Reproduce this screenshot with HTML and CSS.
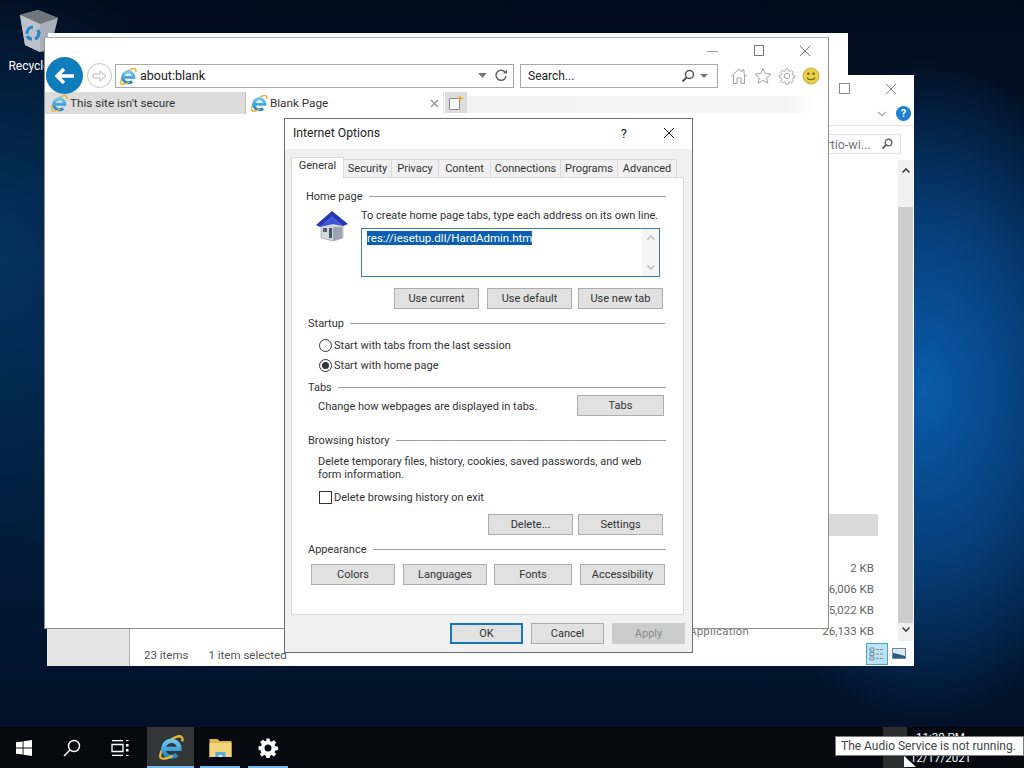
FILE: index.html
```html
<!DOCTYPE html>
<html lang="en">
<head>
<meta charset="utf-8">
<title>Internet Options</title>
<link rel="stylesheet" href="styles.css">
</head>
<body>
<svg class="defs" width="0" height="0" aria-hidden="true">
  <defs>
    <linearGradient id="ieblue" x1="0" y1="0" x2="0" y2="1">
      <stop offset="0" stop-color="#6cc6ee"/>
      <stop offset="1" stop-color="#1f86c8"/>
    </linearGradient>
    <symbol id="ie" viewBox="0 0 24 24">
      <path d="M2.500 22C.5 18 7 6.500 16.500 2.800c4.500-1.700 7-.3 5.800 4" fill="none" stroke="#e9b637" stroke-width="2.100"/>
      <path d="M6.500 13.800h13.300a7.400 7.400 0 1 0-2.300 5.300" fill="none" stroke="url(#ieblue)" stroke-width="4"/>
      <path d="M2 21.800c3 2.200 8.500 0 11.500-1.700" fill="none" stroke="#e9b637" stroke-width="2.100"/>
    </symbol>
  </defs>
</svg>
<main class="desktop">
  <div class="recycle">
    <svg class="recycle-icon" width="42" height="44" viewBox="0 0 42 44">
      <path d="M2 6 L20 1 L40 9 L32 41 L22 43 L7 36Z" fill="#aab0b7"/>
      <path d="M2 6 L20 1 L40 9 L22 15Z" fill="#70767d"/>
      <path d="M2 6 L22 15 L22 43 L7 36Z" fill="#bcc2c9"/>
      <path d="M9 25c0-5 3-7 6-7M20 21c2 4 0 8-3 9M14 30c-2 0-4-1-5-3" fill="none" stroke="#2a86c8" stroke-width="3.200"/>
    </svg>
    <span>Recycle Bin</span>
  </div>

  <section class="win win-back"></section>

  <section class="win win-explorer">
    <div class="exp-head">
      <svg class="ctl" width="12" height="12" viewBox="0 0 12 12"><rect x=".5" y=".5" width="10" height="10" fill="none" stroke="#8a8a8a"/></svg>
      <svg class="ctl" width="12" height="12" viewBox="0 0 12 12"><path d="M1 1l10 10M11 1L1 11" stroke="#8a8a8a"/></svg>
    </div>
    <div class="exp-ribbon">
      <svg width="10" height="6" viewBox="0 0 10 6"><path d="M1 1l4 3.500 4-3.500" fill="none" stroke="#a8a8a8" stroke-width="1.300"/></svg>
      <span class="help">?</span>
    </div>
    <div class="exp-search">
      <span>rtio-wi...</span>
      <svg width="12" height="12" viewBox="0 0 12 12"><circle cx="7.500" cy="4.500" r="3.300" fill="none" stroke="#666" stroke-width="1.400"/><path d="M5 7l-3.500 3.500" stroke="#666" stroke-width="1.800"/></svg>
    </div>
    <div class="exp-main">
      <div class="exp-list">
        <div class="exp-selected"></div>
        <div class="exp-row"><span>2 KB</span></div>
        <div class="exp-row"><span>6,006 KB</span></div>
        <div class="exp-row"><span>5,022 KB</span></div>
        <div class="exp-row"><em>Application</em><span>26,133 KB</span></div>
      </div>
      <div class="scrollbar">
        <svg width="10" height="7" viewBox="0 0 10 7"><path d="M1.500 5.500L5 2l3.500 3.500" fill="none" stroke="#444" stroke-width="1.600"/></svg>
        <div class="thumb"></div>
        <svg width="10" height="7" viewBox="0 0 10 7"><path d="M1.500 1.500L5 5l3.500-3.500" fill="none" stroke="#444" stroke-width="1.600"/></svg>
      </div>
    </div>
    <div class="exp-status">
      <div class="exp-nav"></div>
      <span class="st-a">23 items</span>
      <span class="st-b">1 item selected</span>
      <div class="views">
        <div class="view-on">
          <svg width="16" height="14" viewBox="0 0 16 14"><path d="M1 1h4v3H1zM1 5.500h4v3H1zM1 10h4v3H1z" fill="none" stroke="#7d8d9a"/><path d="M7 2.500h8M7 7h8M7 11.500h8" stroke="#7d8d9a" stroke-dasharray="3 1"/></svg>
        </div>
        <svg width="14" height="11" viewBox="0 0 14 11"><rect x=".5" y=".5" width="13" height="10" fill="#dce6ee" stroke="#6d8aa3"/><path d="M1 5l5 1 7 2v2H1z" fill="#2f5c86"/></svg>
      </div>
    </div>
  </section>

  <section class="win win-ie">
    <div class="ie-caption">
      <svg width="12" height="12" viewBox="0 0 12 12"><path d="M0 6.500h11" stroke="#a0a0a0"/></svg>
      <svg width="12" height="12" viewBox="0 0 12 12"><rect x="1.500" y=".5" width="9" height="10" fill="none" stroke="#7a7a7a"/></svg>
      <svg width="12" height="12" viewBox="0 0 12 12"><path d="M1 1l10 10M11 1L1 11" stroke="#7a7a7a"/></svg>
    </div>
    <div class="ie-toolbar">
      <div class="back">
        <svg width="22" height="18" viewBox="0 0 22 18"><path d="M10 2L3 9l7 7M3 9h17" fill="none" stroke="#fff" stroke-width="3.400"/></svg>
      </div>
      <div class="forward">
        <svg width="16" height="14" viewBox="0 0 16 14"><path d="M1 5h7V2l6 5-6 5V9H1z" fill="#fff" stroke="#b8b8b8"/></svg>
      </div>
      <div class="address">
        <svg width="18" height="18"><use href="#ie"/></svg>
        <span class="addr-text">about:blank</span>
        <svg class="caret" width="9" height="5" viewBox="0 0 9 5"><path d="M0 0h9L4.500 5z" fill="#777"/></svg>
        <svg class="refresh" width="13" height="13" viewBox="0 0 13 13"><path d="M10.500 4a5 5 0 1 0 .5 3" fill="none" stroke="#666" stroke-width="1.500"/><path d="M8 4.500h4V.5z" fill="#666"/></svg>
      </div>
      <div class="search">
        <span>Search...</span>
        <svg class="glass" width="14" height="14" viewBox="0 0 14 14"><circle cx="8.500" cy="5.500" r="4" fill="none" stroke="#555" stroke-width="1.500"/><path d="M5.500 8.500L1.500 12.500" stroke="#555" stroke-width="2"/></svg>
        <svg class="caret" width="8" height="4" viewBox="0 0 8 4"><path d="M0 0h8L4 4z" fill="#777"/></svg>
      </div>
      <div class="ie-tools">
        <svg width="18" height="18" viewBox="0 0 18 18"><path d="M1 9.500L9 2l3 2.800V3h2v3.700l3 2.800M3.500 8v8.500H7V11h4v5.500h3.500V8" fill="none" stroke="#a2a2a2"/></svg>
        <svg width="18" height="18" viewBox="0 0 18 18"><path d="M9 1.500l2.300 5 5.500.6-4.100 3.700 1.200 5.400L9 13.400l-4.900 2.800 1.200-5.400L1.200 7.100l5.500-.6z" fill="none" stroke="#a2a2a2"/></svg>
        <svg width="18" height="18" viewBox="0 0 18 18"><circle cx="9" cy="9" r="2.800" fill="none" stroke="#a2a2a2"/><path d="M7.700 1h2.600l.4 2.300 1.500.7 2-1.300 1.800 1.800-1.300 2 .6 1.500 2.200.4v2.600l-2.200.5-.6 1.400 1.300 2-1.800 1.800-2-1.300-1.500.6-.4 2.100H7.700l-.4-2.100-1.500-.6-2 1.300L2 14.700l1.300-2-.6-1.400-2.200-.5V8.200l2.200-.4.6-1.500-1.300-2L3.800 2.700l2 1.300 1.500-.7z" fill="none" stroke="#a2a2a2" transform="translate(.9 .9) scale(.9)"/></svg>
        <svg width="18" height="18" viewBox="0 0 18 18"><circle cx="9" cy="9" r="8" fill="#e9cf45" stroke="#c7b04a"/><circle cx="6.300" cy="6.800" r="1.200" fill="#6f5a12"/><circle cx="11.700" cy="6.800" r="1.200" fill="#6f5a12"/><path d="M5 10.500c1.500 3 6.500 3 8 0" fill="none" stroke="#6f5a12" stroke-width="1.200"/></svg>
      </div>
    </div>
    <div class="ie-tabs">
      <div class="tab tab-off">
        <svg width="18" height="18"><use href="#ie"/></svg>
        <span>This site isn't secure</span>
      </div>
      <div class="tab tab-on">
        <svg width="18" height="18"><use href="#ie"/></svg>
        <span>Blank Page</span>
        <svg class="tab-x" width="9" height="9" viewBox="0 0 9 9"><path d="M1 1l7 7M8 1L1 8" stroke="#9a9a9a" stroke-width="1.500"/></svg>
      </div>
      <div class="tab-new">
        <svg width="16" height="16" viewBox="0 0 16 16"><path d="M1.500 3.500h10v11h-10z" fill="#fff" stroke="#8a8a8a"/><path d="M12 0l1 2.300 2.500 1-2.500 1-1 2.300-1-2.300-2.500-1 2.500-1z" fill="#e6a92a"/></svg>
      </div>
      <div class="tab-fade"></div>
    </div>
  </section>

  <section class="dialog">
    <header class="dlg-title">
      <span class="dlg-name">Internet Options</span>
      <span class="dlg-help">?</span>
      <svg width="12" height="12" viewBox="0 0 12 12"><path d="M1 1l10 10M11 1L1 11" stroke="#222"/></svg>
    </header>
    <nav class="dlg-tabs">
      <span class="dt dt-on">General</span>
      <span class="dt dt-1">Security</span>
      <span class="dt dt-2">Privacy</span>
      <span class="dt dt-3">Content</span>
      <span class="dt dt-4">Connections</span>
      <span class="dt dt-5">Programs</span>
      <span class="dt dt-6">Advanced</span>
    </nav>
    <div class="panel">
      <div class="legend lg-home"><span>Home page</span></div>
      <div class="home-row">
        <svg class="house" width="34" height="32" viewBox="0 0 34 32">
          <path d="M6 14h22v14l-10 3-12-3z" fill="#d3d8df" stroke="#8d97a5" stroke-width=".6"/>
          <path d="M18 17h9v11l-9 3z" fill="#9aa4b4"/>
          <path d="M1 15L17 1l16 13-5 2L17 7 5 17z" fill="#2438b8"/>
          <path d="M5 17L17 7l11 9-10-2z" fill="#3f55d6"/>
          <rect x="8" y="18" width="4" height="4" fill="#53606f"/>
          <rect x="14" y="18" width="3" height="10" fill="#4a5563"/>
        </svg>
        <div class="home-body">
          <p class="home-hint">To create home page tabs, type each address on its own line.</p>
          <div class="urlbox">
            <span class="url-sel">res://iesetup.dll/HardAdmin.htm</span>
            <div class="url-scroll">
              <svg width="10" height="7" viewBox="0 0 10 7"><path d="M1.500 5.500L5 2l3.500 3.500" fill="none" stroke="#bdbdbd" stroke-width="1.500"/></svg>
              <svg width="10" height="7" viewBox="0 0 10 7"><path d="M1.500 1.500L5 5l3.500-3.500" fill="none" stroke="#bdbdbd" stroke-width="1.500"/></svg>
            </div>
          </div>
        </div>
      </div>
      <div class="btn-row br-home">
        <span class="btn b85">Use current</span>
        <span class="btn b85">Use default</span>
        <span class="btn b85">Use new tab</span>
      </div>
      <div class="legend lg-startup"><span>Startup</span></div>
      <div class="choice ch-1"><span class="radio"></span><span>Start with tabs from the last session</span></div>
      <div class="choice ch-2"><span class="radio radio-on"></span><span>Start with home page</span></div>
      <div class="legend lg-tabs"><span>Tabs</span></div>
      <div class="tabs-row">
        <span class="tabs-text">Change how webpages are displayed in tabs.</span>
        <span class="btn b87">Tabs</span>
      </div>
      <div class="legend lg-history"><span>Browsing history</span></div>
      <p class="hist-text">Delete temporary files, history, cookies, saved passwords, and web form information.</p>
      <div class="choice ch-3"><span class="check"></span><span>Delete browsing history on exit</span></div>
      <div class="btn-row br-hist">
        <span class="btn b85">Delete...</span>
        <span class="btn b85">Settings</span>
      </div>
      <div class="legend lg-appear"><span>Appearance</span></div>
      <div class="btn-row br-appear">
        <span class="btn b84">Colors</span>
        <span class="btn b84">Languages</span>
        <span class="btn b78">Fonts</span>
        <span class="btn b85">Accessibility</span>
      </div>
    </div>
    <footer class="dlg-foot">
      <span class="btn b73 btn-ok">OK</span>
      <span class="btn b73">Cancel</span>
      <span class="btn b73 btn-off">Apply</span>
    </footer>
  </section>

  <footer class="taskbar">
    <div class="tb-item">
      <svg width="16" height="16" viewBox="0 0 16 16"><path d="M0 2.300l6.600-.9v6.200H0zM7.500 1.300L16 0v7.600H7.500zM0 8.400h6.600v6.200L0 13.700zM7.500 8.400H16V16l-8.500-1.300z" fill="#fff"/></svg>
    </div>
    <div class="tb-item">
      <svg width="18" height="18" viewBox="0 0 18 18"><circle cx="11" cy="7" r="5.500" fill="none" stroke="#fff" stroke-width="1.400"/><path d="M7 11l-6 6" stroke="#fff" stroke-width="1.500"/></svg>
    </div>
    <div class="tb-item">
      <svg width="18" height="16" viewBox="0 0 18 16"><path d="M1 .5h11M1 15.500h11M1 4.500h11v7H1z" fill="none" stroke="#fff" stroke-width="1.300"/><path d="M15 4h2.500v2.500H15zM15 9h2.500v2.500H15z" fill="#fff"/><path d="M15 .5h2.500M15 15.500h2.500" stroke="#fff"/></svg>
    </div>
    <div class="tb-item tb-active">
      <svg width="26" height="26"><use href="#ie"/></svg>
    </div>
    <div class="tb-item tb-open tb-folder">
      <svg width="23" height="20" viewBox="0 0 22 20"><path d="M0 1h8l2 2h12v16H0z" fill="#e3b84a"/><path d="M0 5h22v14H0z" fill="#f3d67c"/><path d="M6 19v-5h10v5z" fill="#5aa9dc"/><path d="M9 19v-2h4v2z" fill="#f3e6c0"/></svg>
    </div>
    <div class="tb-item tb-open">
      <svg width="20" height="20" viewBox="0 0 20 20"><path d="M8.300 0h3.400l.5 2.800 1.700.7 2.300-1.600 2.400 2.400-1.600 2.300.7 1.700 2.800.5v3.400l-2.800.5-.7 1.700 1.600 2.300-2.400 2.400-2.300-1.600-1.700.7-.5 2.800H8.300l-.5-2.800-1.700-.7-2.300 1.600-2.400-2.400 1.600-2.300-.7-1.700L0 11.700V8.300l2.800-.5.7-1.700-1.600-2.300 2.400-2.400 2.300 1.600 1.700-.7z" fill="#fff" transform="scale(.95) translate(.5 .5)"/><circle cx="10" cy="10" r="3.500" fill="#0a0e14"/></svg>
    </div>
    <div class="tray">
      <div class="tray-hi"></div>
      <div class="clock"><span>11:30 PM</span><span>12/17/2021</span></div>
    </div>
  </footer>
  <div class="tooltip">The Audio Service is not running.</div>
  <svg class="cursor" width="14" height="14" viewBox="0 0 14 14"><path d="M0 0l12 11H0z" fill="#fff"/></svg>
</main>
</body>
</html>
```
FILE: styles.css
```css
* { box-sizing: border-box; }
html, body { margin: 0; padding: 0; }
body { font-family: Roboto, "Noto Sans", sans-serif; font-size: 11px; color: #333; }
.defs { position: absolute; }
svg { display: block; flex: none; }
p { margin: 0; }

.desktop {
  position: relative;
  width: 1024px;
  height: 768px;
  overflow: hidden;
  background:
    radial-gradient(ellipse 210px 330px at 925px 390px, #0a5ba9 0%, rgba(8, 75, 145, .75) 50%, rgba(5, 50, 105, 0) 100%),
    radial-gradient(ellipse 220px 300px at 0 260px, #04335f 0%, rgba(4, 51, 95, 0) 100%),
    linear-gradient(180deg, #020b1c 0%, #021a38 40%, #021a38 70%, #010f24 100%);
}

.recycle { position: absolute; left: 0; top: 9px; width: 78px; display: flex; flex-direction: column; align-items: center; color: #fff; font-size: 12px; line-height: 16px; }
.recycle-icon { margin-bottom: 5px; }

.win { position: absolute; background: #fff; }
.win-back { left: 48px; top: 33px; width: 800px; height: 200px; }
.win-explorer { left: 47px; top: 75px; width: 867px; height: 591px; display: flex; flex-direction: column; }

.exp-head { display: flex; justify-content: flex-end; gap: 34px; height: 28px; padding: 8px 17px 0 0; }
.exp-ribbon { display: flex; justify-content: flex-end; align-items: center; gap: 9px; height: 25px; padding: 0 3px 0 0; border-bottom: 1px solid #e4e4e4; }
.help { width: 15px; height: 15px; border-radius: 50%; background: #1f7fd0; color: #fff; font-size: 11px; font-weight: 700; line-height: 15px; text-align: center; }
.exp-search { align-self: flex-end; display: flex; align-items: center; justify-content: space-between; width: 130px; height: 21px; margin: 8px 13px 0 0; padding: 0 7px 0 0; border: 1px solid #e2e2e2; color: #777; font-size: 12.500px; }
.exp-search span { margin-left: 54px; }
.exp-main { flex: 1; display: flex; justify-content: flex-end; padding-top: 6px; }
.exp-list { width: 200px; padding: 0 24px 0 0; display: flex; flex-direction: column; align-items: stretch; }
.exp-selected { height: 22px; margin: 354px -4px 0 0; background: #dadada; flex: none; }
.exp-row { height: 21px; flex: none; display: flex; justify-content: flex-end; align-items: center; color: #666; font-size: 11.500px; position: relative; }
.exp-selected + .exp-row { margin-top: 21px; }
.exp-row em { position: absolute; left: -9px; font-style: normal; color: #777; letter-spacing: .2px; }
.scrollbar { width: 15px; margin-right: 1px; display: flex; flex-direction: column; align-items: center; padding-top: 7px; background: #f0f0f0; }
.thumb { width: 100%; height: 416px; margin: 33px 0 3px; flex: none; background: #cdcdcd; }
.exp-status { position: relative; display: flex; height: 26px; color: #555; font-size: 11.500px; }
.exp-nav { position: absolute; left: 0; bottom: 0; width: 83px; height: 38px; background: #e6e6e6; border-right: 1px solid #b0b0b0; }
.st-a { margin: 7px 0 0 97px; }
.st-b { margin: 7px 0 0 20px; }
.views { margin-left: auto; margin-right: 8px; display: flex; align-items: center; gap: 4px; align-self: flex-end; margin-bottom: 1px; }
.view-on { width: 22px; height: 22px; background: #b9e3f7; border: 1px solid #4ea3c8; display: flex; align-items: center; justify-content: center; }

.win-ie { left: 44px; top: 37px; width: 785px; height: 592px; border: 1px solid #8f8f8f; border-top-color: #a9aeb6; display: flex; flex-direction: column; z-index: 2; }
.ie-caption { display: flex; justify-content: flex-end; gap: 34px; height: 24px; padding: 7px 17px 0 0; }
.ie-toolbar { position: relative; display: flex; align-items: center; height: 27px; padding-left: 70px; }
.back { position: absolute; left: 1px; top: -5px; width: 37px; height: 37px; border-radius: 50%; background: #0f7dbb; display: flex; align-items: center; justify-content: center; z-index: 3; }
.forward { position: absolute; left: 42px; top: 1px; width: 25px; height: 25px; border-radius: 50%; border: 1px solid #c4c4c4; display: flex; align-items: center; justify-content: center; }
.address { width: 399px; height: 24px; border: 1px solid #a8a8a8; display: flex; align-items: center; padding: 0 5px 0 3px; color: #222; font-size: 12.500px; }
.addr-text { margin-left: 3px; }
.address .caret { margin-left: auto; }
.refresh { margin-left: 8px; }
.search { width: 198px; height: 24px; margin-left: 6px; border: 1px solid #a8a8a8; display: flex; align-items: center; padding: 0 9px 0 7px; color: #222; font-size: 12px; }
.glass { margin-left: auto; }
.search .caret { margin-left: 5px; }
.ie-tools { display: flex; align-items: center; gap: 6px; margin-left: 12px; }
.ie-tabs { display: flex; height: 23px; margin-top: 3px; }
.tab { display: flex; align-items: center; height: 22px; padding-left: 5px; gap: 2px; font-size: 11.700px; color: #333; }
.tab-off { width: 200px; background: #dcdcdc; }
.tab-on { width: 199px; padding-left: 4px; background: #fff; border-left: 1px solid #bbb; border-right: 1px solid #e0e0e0; }
.tab-x { margin-left: auto; margin-right: 4px; }
.tab-new { width: 22px; height: 21px; background: #dcdcdc; margin-left: 1px; display: flex; align-items: center; justify-content: center; }
.tab-fade { width: 348px; height: 17px; margin-top: 4px; background: linear-gradient(90deg, #f2f2f2 0%, #f4f4f4 92%, #fff 100%); }

.dialog { position: absolute; left: 284px; top: 118px; width: 409px; height: 535px; background: #f0f0f0; border: 1px solid #6e6e6e; z-index: 4; display: flex; flex-direction: column; }
.dlg-title { display: flex; align-items: center; height: 30px; background: #fff; padding: 0 17px 2px 8px; color: #222; }
.dlg-name { font-size: 12.200px; }
.dlg-help { margin-left: auto; margin-right: 36px; font-size: 13px; }
.dlg-tabs { display: flex; align-items: flex-end; height: 28px; padding-left: 6px; }
.dt { height: 18px; line-height: 17px; text-align: center; background: #f0f0f0; border: 1px solid #d9d9d9; border-left: 0; border-bottom: 0; color: #333; }
.dt-on { height: 21px; line-height: 16px; background: #fff; border-left: 1px solid #d9d9d9; margin-bottom: -1px; position: relative; z-index: 1; width: 53px; }
.dt-1 { width: 48px; }
.dt-2 { width: 47px; }
.dt-3 { width: 52px; }
.dt-4 { width: 70px; }
.dt-5 { width: 57px; }
.dt-6 { width: 59px; }
.panel { width: 393px; height: 438px; margin-left: 6px; background: #fff; border: 1px solid #d9d9d9; padding: 0 17px 0 14px; }
.legend { display: flex; align-items: center; gap: 6px; height: 14px; color: #333; }
.legend::after { content: ""; flex: 1; height: 1px; background: #a0a0a0; }
.lg-home { margin-top: 11px; }
.lg-startup { margin: 7px 1px 0 2px; }
.lg-tabs { margin: 7px 0 0 2px; }
.lg-history { margin: 17px 0 0 2px; }
.lg-appear { margin: 7px 0 0 2px; }
.home-row { display: flex; margin-top: 6px; padding-left: 9px; }
.house { margin: 1px 12px 0 0; }
.home-body { flex: 1; }
.home-hint { line-height: 14px; white-space: nowrap; }
.urlbox { position: relative; width: 299px; height: 49px; margin-top: 5px; border: 1px solid #3a82aa; padding: 3px 5px; color: #fff; font-size: 11.500px; line-height: 13px; }
.url-sel { background: #0a5fb0; }
.url-scroll { position: absolute; right: 0; top: 0; bottom: 0; width: 17px; background: #f4f4f4; display: flex; flex-direction: column; justify-content: space-between; align-items: center; padding: 5px 0; }
.btn-row { display: flex; }
.br-home { justify-content: flex-end; gap: 8px; margin: 11px 3px 0 0; }
.br-home .btn:last-child { margin-left: -2px; }
.btn { height: 21px; display: flex; align-items: center; justify-content: center; background: #e1e1e1; border: 1px solid #adadad; color: #333; }
.b85 { width: 85px; }
.b87 { width: 87px; margin-left: auto; }
.b84 { width: 84px; }
.b78 { width: 78px; }
.b73 { width: 73px; }
.choice { display: flex; align-items: center; color: #333; height: 16px; margin-left: 13px; }
.ch-1 { margin-top: 7px; }
.ch-2 { margin-top: 4px; }
.ch-3 { margin-top: 8px; }
.radio { width: 13px; height: 13px; border: 1px solid #333; border-radius: 50%; margin-right: 2px; position: relative; flex: none; }
.radio-on::after { content: ""; position: absolute; left: 2px; top: 2px; width: 7px; height: 7px; border-radius: 50%; background: #333; }
.check { width: 13px; height: 13px; border: 1px solid #333; margin-right: 2px; flex: none; }
.tabs-row { display: flex; align-items: flex-start; margin: 1px 2px 0 12px; height: 21px; }
.tabs-text { padding-top: 5px; }
.hist-text { width: 340px; margin: 8px 0 0 12px; line-height: 13px; }
.br-hist { justify-content: flex-end; gap: 5px; margin: 9px 3px 0 0; }
.br-appear { gap: 8px; margin: 8px -1px 0 5px; }
.br-appear .btn:nth-child(3) { margin-left: -1px; }
.dlg-foot { display: flex; gap: 8px; padding: 8px 0 0 165px; }
.btn-ok { border: 2px solid #1478b8; }
.btn-off { background: #cccccc; border-color: #cccccc; color: #8a8a8a; }

.taskbar { position: absolute; left: 0; right: 0; bottom: 0; height: 41px; display: flex; background: #060a10; z-index: 5; }
.tb-item { width: 48px; height: 41px; display: flex; align-items: center; justify-content: center; }
.tb-active { width: 47px; margin-left: 3px; background: #333537; border-bottom: 2px solid #76b9ed; }
.tb-open { position: relative; }
.tb-folder { margin-left: 2px; }
.tb-open::after { content: ""; position: absolute; left: 4px; right: 4px; bottom: 0; height: 2px; background: #76b9ed; }
.tray { margin-left: auto; display: flex; padding-right: 52px; color: #fff; font-size: 11.500px; }
.tray-hi { width: 24px; background: #2c2e30; margin-right: 2px; }
.clock { width: 63px; display: flex; flex-direction: column; align-items: center; justify-content: space-between; padding: 3px 0 3px; line-height: 14px; }
.tooltip { position: absolute; left: 835px; top: 736px; width: 189px; height: 20px; background: #fff; border: 1px solid #7a7a7a; color: #444; font-size: 12px; line-height: 18px; padding-left: 5px; white-space: nowrap; z-index: 6; }
.cursor { position: absolute; left: 904px; top: 756px; z-index: 7; }
```
